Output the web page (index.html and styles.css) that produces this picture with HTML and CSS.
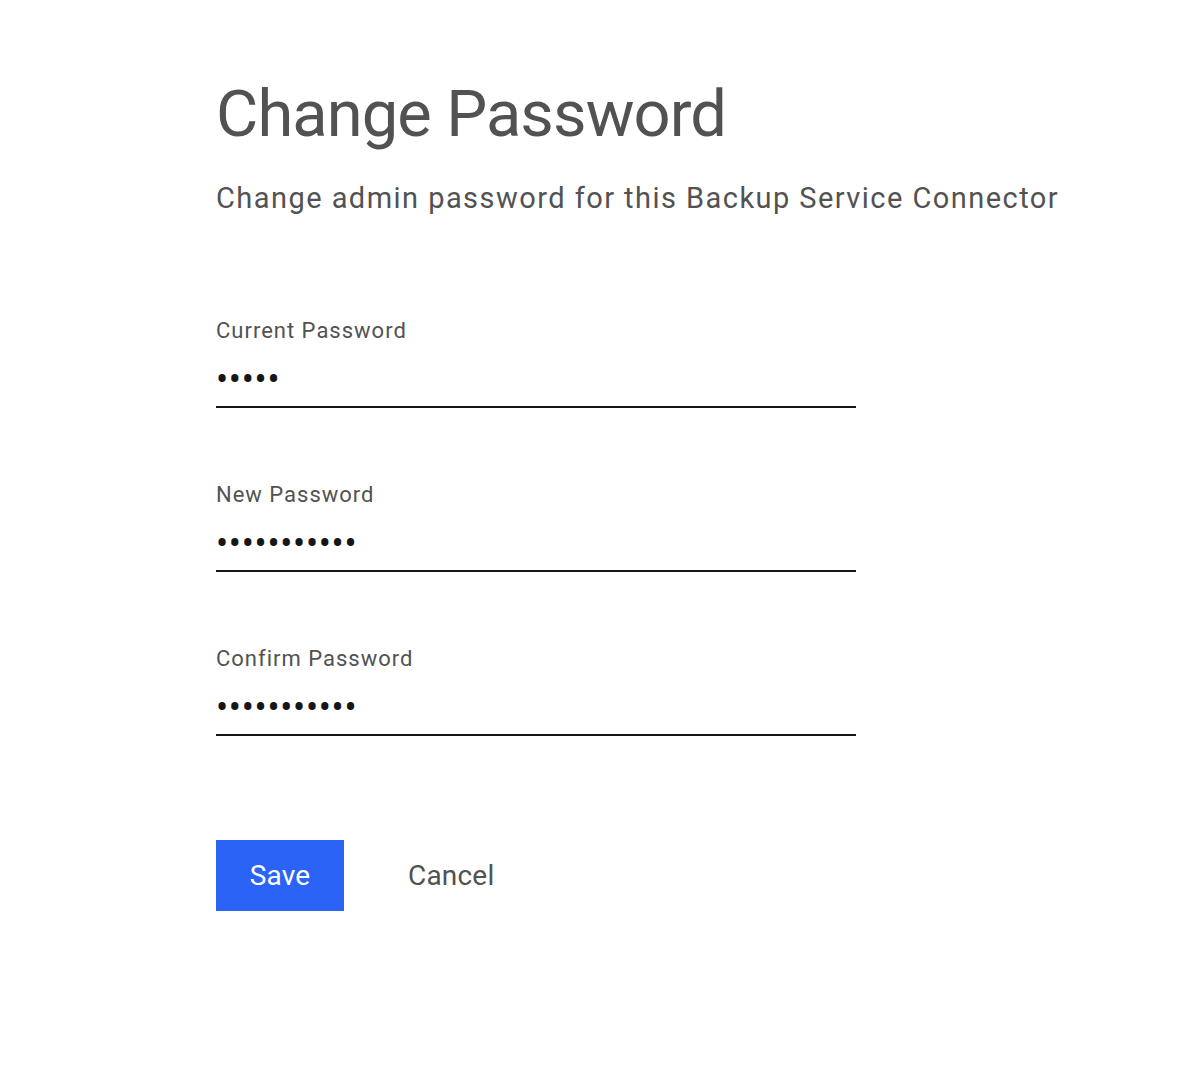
FILE: index.html
```html
<!DOCTYPE html>
<html lang="en">
<head>
<meta charset="utf-8">
<title>Change Password</title>
<link rel="stylesheet" href="styles.css">
</head>
<body>
<main class="page">
  <h1 class="title">Change Password</h1>
  <p class="subtitle">Change admin password for this Backup Service Connector</p>
  <form class="form">
    <div class="field">
      <label class="label" for="cur">Current Password</label>
      <input class="input" id="cur" type="password" value="abcde">
    </div>
    <div class="field">
      <label class="label" for="new">New Password</label>
      <input class="input" id="new" type="password" value="abcdefghijk">
    </div>
    <div class="field">
      <label class="label" for="conf">Confirm Password</label>
      <input class="input" id="conf" type="password" value="abcdefghijk">
    </div>
    <div class="actions">
      <button type="button" class="btn btn-primary">Save</button>
      <button type="button" class="btn btn-ghost">Cancel</button>
    </div>
  </form>
</main>
</body>
</html>
```

FILE: styles.css
```css
html, body {
  margin: 0;
  padding: 0;
  background: #ffffff;
}
body {
  font-family: Roboto, "Liberation Sans", sans-serif;
  color: #525252;
}
.page {
  padding: 74px 0 0 216px;
}
.title {
  margin: 0;
  font-size: 65px;
  line-height: 80px;
  font-weight: 400;
  letter-spacing: -0.9px;
  color: #525252;
}
.subtitle {
  margin: 26px 0 0;
  font-size: 29px;
  line-height: 36px;
  font-weight: 400;
  letter-spacing: 1.45px;
}
.form {
  margin-top: 103px;
  width: 640px;
}
.field {
  display: flex;
  flex-direction: column;
  margin-bottom: 75px;
}
.label {
  font-size: 22px;
  line-height: 24px;
  letter-spacing: 1px;
  color: #525252;
}
.input {
  display: block;
  box-sizing: border-box;
  width: 640px;
  height: 50px;
  margin-top: 15px;
  padding: 2px 0 6px;
  border: none;
  border-bottom: 2px solid #161616;
  background: transparent;
  font-family: Roboto, sans-serif;
  font-size: 36px;
  letter-spacing: 0.7px;
  color: #161616;
  outline: none;
}
.actions {
  display: flex;
  align-items: center;
  gap: 64px;
  margin-top: 104px;
}
.btn {
  font-family: Roboto, "Liberation Sans", sans-serif;
  font-size: 28px;
  letter-spacing: 0.2px;
  border: none;
  padding: 0;
  cursor: pointer;
}
.btn-primary {
  width: 128px;
  height: 71px;
  background: #2b63f6;
  color: #ffffff;
}
.btn-ghost {
  background: transparent;
  color: #525252;
}
```
